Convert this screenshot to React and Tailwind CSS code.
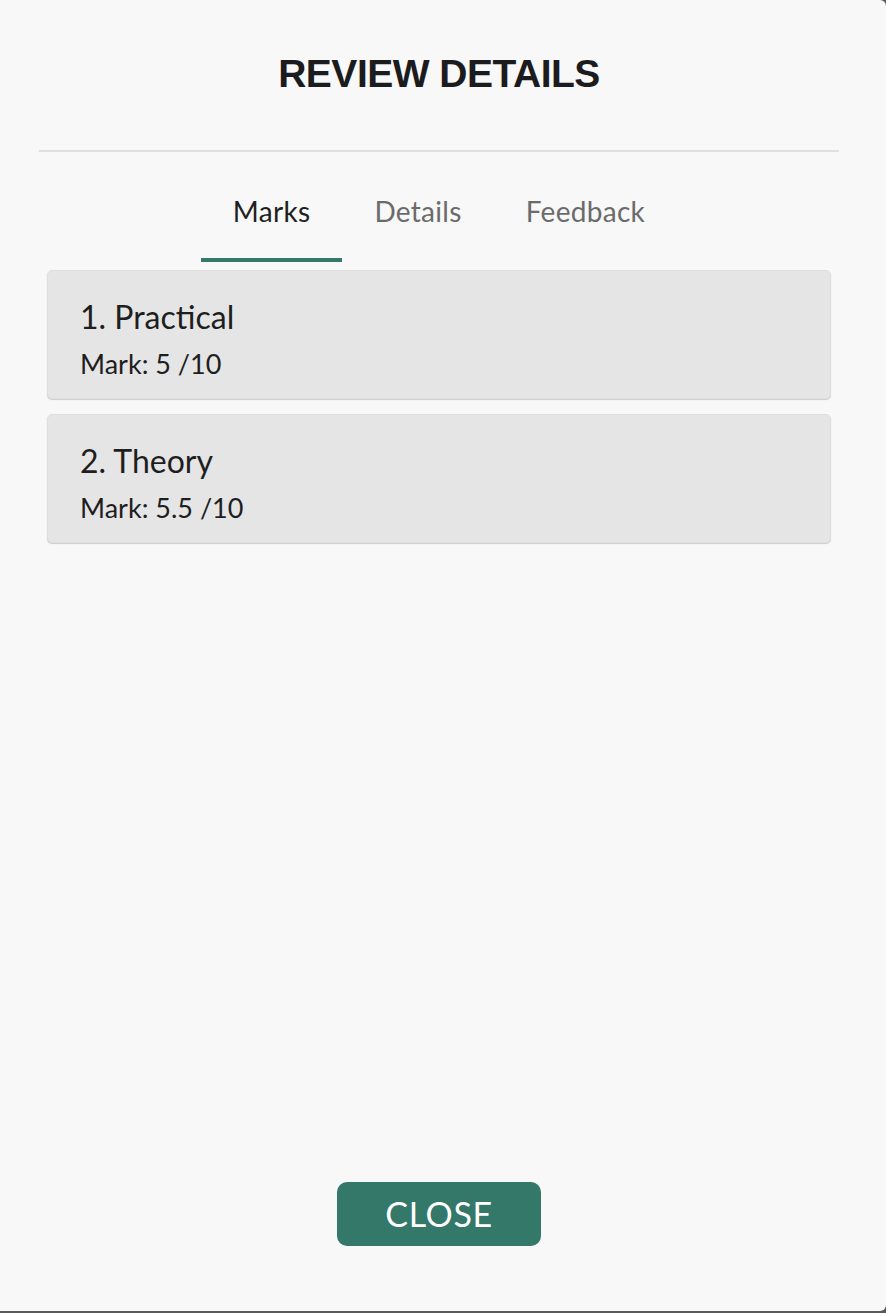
import React from "react";

export default function App() {
  const tabs = [
    { label: "Marks", active: true },
    { label: "Details", active: false },
    { label: "Feedback", active: false },
  ];
  const items = [
    { title: "1. Practical", mark: "Mark: 5 /10" },
    { title: "2. Theory", mark: "Mark: 5.5 /10" },
  ];
  return (
    <div className="w-[886px] h-[1313px] bg-[#5a5a5a] overflow-hidden">
      <div
        className="w-[886px] h-[1311px] bg-[#f8f8f8] rounded-tr-[6px] rounded-br-[6px] flex flex-col"
        style={{ fontFamily: "Lato, 'Open Sans', sans-serif" }}
      >
        <div className="w-[878px] flex flex-col flex-1">
          <h1
            className="pt-[52px] text-center text-[39px] leading-[44px] font-bold tracking-[-0.5px] text-[#1c1c1e]"
            style={{ fontFamily: "'Liberation Sans', Arial, sans-serif" }}
          >
            REVIEW DETAILS
          </h1>
          <div className="mt-[54px] mx-[39px] h-[2px] bg-[#e0e0e0]" />
          <div className="flex justify-center">
            {tabs.map((t) => (
              <div
                key={t.label}
                className={
                  "px-[32px] pt-[43px] pb-[31px] text-[28px] leading-[32px] tracking-[0.3px] border-b-4 " +
                  (t.active
                    ? "border-[#347a6a] text-[#1f1f1f]"
                    : "border-transparent text-[#6b6b6b]")
                }
              >
                {t.label}
              </div>
            ))}
          </div>
          <div className="mx-[47px] mt-[8px] flex flex-col gap-[15px]">
            {items.map((it) => (
              <div
                key={it.title}
                className="h-[129px] bg-[#e5e5e5] rounded-[5px] border border-[#dedede] shadow-[0_1px_1px_rgba(0,0,0,0.18)] px-[32px] pt-[28px] text-[#1e1e1e]"
              >
                <div className="text-[32px] leading-[36px]">{it.title}</div>
                <div className="mt-[13px] text-[27px] leading-[32px]">{it.mark}</div>
              </div>
            ))}
          </div>
          <div className="flex-1" />
          <div className="flex justify-center mb-[65px]">
            <button className="w-[204px] h-[64px] rounded-[10px] bg-[#337868] text-white text-[34px] leading-none tracking-[0.6px]">
              CLOSE
            </button>
          </div>
        </div>
      </div>
    </div>
  );
}
